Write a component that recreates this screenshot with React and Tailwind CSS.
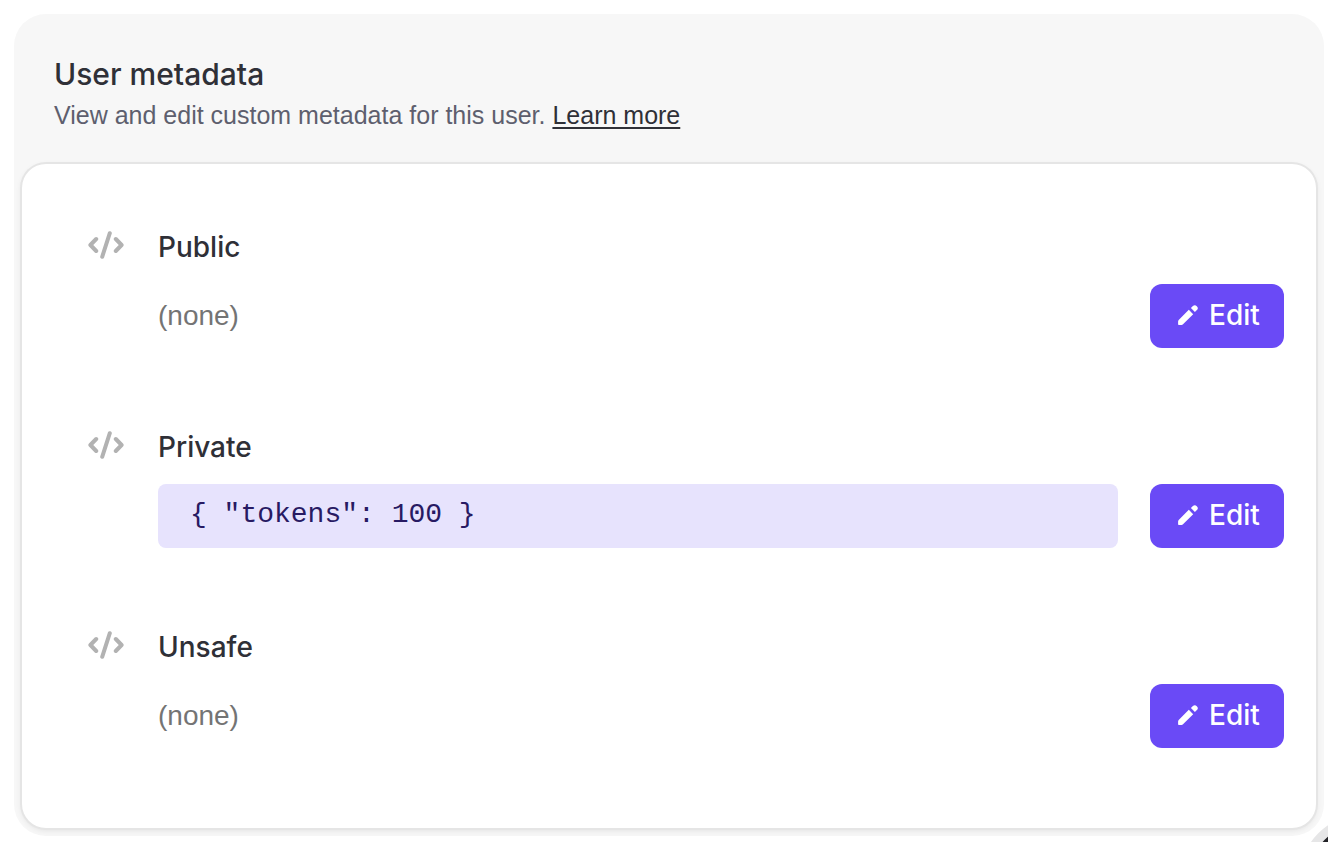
const sections = [
    { id: 'public', label: 'Public', value: null },
    { id: 'private', label: 'Private', value: '{ "tokens": 100 }' },
    { id: 'unsafe', label: 'Unsafe', value: null },
];

function CodeIcon() {
    return (
        <svg className="w-9 h-7 shrink-0" viewBox="0 0 36 28" fill="none" stroke="#b2b2b2" strokeWidth="4" strokeLinecap="round" strokeLinejoin="round" aria-hidden="true">
            <path d="M8.2 8 2.4 14l5.8 6M27.8 8l5.8 6-5.8 6M21.8 2.2l-7.6 23.6" />
        </svg>
    );
}

function PencilIcon() {
    return (
        <svg className="size-5 shrink-0" viewBox="0 0 20 20" fill="currentColor" aria-hidden="true">
            <path d="M10.8 4.8 15.2 9.2 5 19.3q-.6.6-1.4.6H.8q-.7 0-.7-.7v-2.8q0-.8.6-1.4z" />
            <path d="M12.9 3.1 14.9 1.1q1.9-1.9 3.9.1 2 2 .1 3.9l-2 2z" />
        </svg>
    );
}

function MetadataRow({ id, label, value }) {
    return (
        <section className="flex items-start gap-[34px]" aria-labelledby={`${id}-label`}>
            <div className="pt-[3px]">
                <CodeIcon />
            </div>
            <div className="flex-1 min-w-0">
                <h3 id={`${id}-label`} className="text-[28px] leading-[38px] font-medium text-[#2f3037]">{label}</h3>
                <div className="mt-[18px] flex items-center gap-8">
                    {value ? (
                        <pre className="flex-1 min-w-0 h-16 px-8 rounded-lg bg-[#e7e3fd] text-[#281a63] font-['Liberation_Mono',monospace] text-[28px] leading-[62px] overflow-hidden">{value}</pre>
                    ) : (
                        <p className="flex-1 font-['Liberation_Sans',sans-serif] text-[28px] leading-10 text-[#747474]">(none)</p>
                    )}
                    <button type="button" aria-describedby={`${id}-label`} className="h-16 w-[134px] pl-1 pb-0.5 shrink-0 rounded-xl bg-[#6a4af6] flex items-center justify-center gap-[11px] text-[28px] font-medium text-white">
                        <PencilIcon />
                        Edit
                    </button>
                </div>
            </div>
        </section>
    );
}

export default function App() {
    return (
        <main className="pt-3.5 pl-3.5 pr-1 pb-1.5 bg-white font-['Inter',sans-serif]">
            <div className="rounded-[32px] bg-[#f7f7f7] p-2">
                <header className="px-8 pt-8 pb-8">
                    <h2 className="text-[30px] leading-10 font-medium text-[#2f3037]">User metadata</h2>
                    <p className="mt-1 font-['Liberation_Sans',sans-serif] text-[25px] leading-[34px] text-[#5e5f6e]">
                        View and edit custom metadata for this user.{' '}
                        <a href="#learn-more" className="text-[#2f3037] underline decoration-2 underline-offset-3">Learn more</a>
                    </p>
                </header>
                <div className="rounded-[24px] bg-white ring-2 ring-[#e5e5e5] shadow-[0_2px_6px_rgba(0,0,0,0.10)] pt-16 pb-20 pl-[66px] pr-8 flex flex-col gap-20">
                    {sections.map((section) => (
                        <MetadataRow key={section.id} {...section} />
                    ))}
                </div>
            </div>
            <button type="button" aria-label="Help" className="fixed -right-[91px] -bottom-[92px] size-[118px] rounded-full border-[9px] border-[#e6e6e7] bg-[#212126]" />
        </main>
    );
}
